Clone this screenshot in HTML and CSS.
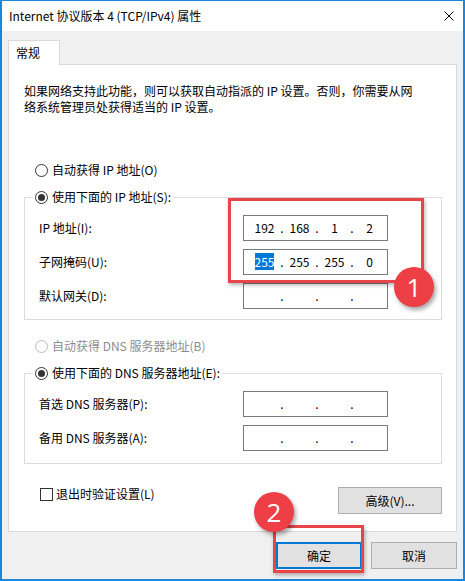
FILE: index.html
```html
<!DOCTYPE html>
<html lang="zh-CN">
<head>
    <meta charset="UTF-8">
    <title>Internet 协议版本 4 (TCP/IPv4) 属性</title>
    <link rel="stylesheet" href="styles.css">
</head>
<body>
    <div class="window">
        <div class="titlebar">
            <span class="title">Internet 协议版本 4 (TCP/IPv4) 属性</span>
            <svg class="close" width="10" height="10" viewBox="0 0 10 10">
                <path d="M0.5 0.5 L9.5 9.5 M9.5 0.5 L0.5 9.5" stroke="#000" stroke-width="1" fill="none"/>
            </svg>
        </div>
        <div class="client">
            <div class="tab">常规</div>
            <div class="panel">
                <p class="desc">如果网络支持此功能，则可以获取自动指派的 IP 设置。否则，你需要从网<br>络系统管理员处获得适当的 IP 设置。</p>

                <div class="radio first"><span class="circle"></span>自动获得 IP 地址(O)</div>

                <fieldset class="group">
                    <legend><div class="radio"><span class="circle checked"></span>使用下面的 IP 地址(S):</div></legend>
                    <div class="row">
                        <span class="row-label">IP 地址(I):</span>
                        <div class="ip">
                            <span class="seg">192</span><span class="sep">.</span><span class="seg">168</span><span class="sep">.</span><span class="seg">1</span><span class="sep">.</span><span class="seg">2</span>
                        </div>
                    </div>
                    <div class="row">
                        <span class="row-label">子网掩码(U):</span>
                        <div class="ip">
                            <span class="seg"><span class="sel">255</span></span><span class="sep">.</span><span class="seg">255</span><span class="sep">.</span><span class="seg">255</span><span class="sep">.</span><span class="seg">0</span>
                        </div>
                    </div>
                    <div class="row">
                        <span class="row-label">默认网关(D):</span>
                        <div class="ip">
                            <span class="seg"></span><span class="sep">.</span><span class="seg"></span><span class="sep">.</span><span class="seg"></span><span class="sep">.</span><span class="seg"></span>
                        </div>
                    </div>
                </fieldset>

                <div class="radio disabled"><span class="circle"></span>自动获得 DNS 服务器地址(B)</div>

                <fieldset class="group dns">
                    <legend><div class="radio"><span class="circle checked"></span>使用下面的 DNS 服务器地址(E):</div></legend>
                    <div class="row">
                        <span class="row-label">首选 DNS 服务器(P):</span>
                        <div class="ip">
                            <span class="seg"></span><span class="sep">.</span><span class="seg"></span><span class="sep">.</span><span class="seg"></span><span class="sep">.</span><span class="seg"></span>
                        </div>
                    </div>
                    <div class="row">
                        <span class="row-label">备用 DNS 服务器(A):</span>
                        <div class="ip">
                            <span class="seg"></span><span class="sep">.</span><span class="seg"></span><span class="sep">.</span><span class="seg"></span><span class="sep">.</span><span class="seg"></span>
                        </div>
                    </div>
                </fieldset>

                <div class="footer">
                    <div class="check"><span class="box"></span>退出时验证设置(L)</div>
                    <button class="btn adv">高级(V)...</button>
                </div>
            </div>
            <div class="actions">
                <button class="btn default">确定</button>
                <button class="btn">取消</button>
            </div>
        </div>

        <!-- annotations -->
        <div class="mark mark-1"></div>
        <div class="badge badge-1">1</div>
        <div class="mark mark-2"></div>
        <div class="badge badge-2">2</div>
    </div>
</body>
</html>
```

FILE: styles.css
```css
body {
    margin: 0;
    font-family: "Noto Sans CJK SC", sans-serif;
    font-size: 12px;
    line-height: 16px;
    color: #000;
}
.window {
    position: relative;
    width: 465px;
    height: 581px;
    box-sizing: border-box;
    border: 2px solid #1a86dc;
    border-top-width: 1px;
    background-color: #f0f0f0;
}
.titlebar {
    height: 30px;
    background-color: #fff;
    display: flex;
    align-items: center;
    justify-content: space-between;
    padding: 0 9px 0 7px;
}
.close {
    display: block;
}
.client {
    padding: 9px 6px 0 6px;
}
.tab {
    position: relative;
    z-index: 1;
    width: 52px;
    height: 25px;
    box-sizing: border-box;
    border: 1px solid #d9d9d9;
    border-bottom: none;
    background-color: #fff;
    padding: 4px 0 0 7px;
    margin-bottom: -1px;
}
.panel {
    height: 468px;
    box-sizing: border-box;
    border: 1px solid #d9d9d9;
    background-color: #fff;
    padding: 18px 13px 0 15px;
}
.desc {
    margin: 0;
}
.radio {
    display: flex;
    align-items: center;
    gap: 4px;
    height: 16px;
    white-space: nowrap;
}
.radio.first {
    margin-top: 47px;
    padding-left: 11px;
}
.radio.disabled {
    margin-top: 18px;
    padding-left: 11px;
    color: #8d8d8d;
}
.circle {
    position: relative;
    width: 13px;
    height: 13px;
    box-sizing: border-box;
    border: 1px solid #333;
    border-radius: 50%;
    background-color: #fff;
}
.circle.checked::after {
    content: "";
    position: absolute;
    left: 2px;
    top: 2px;
    width: 7px;
    height: 7px;
    border-radius: 50%;
    background-color: #333;
}
.disabled .circle {
    border-color: #bcbcbc;
}
.group {
    width: 418px;
    box-sizing: border-box;
    min-width: 0;
    margin: 11px 0 0;
    padding: 10px 0 10px 0;
    border: 1px solid #dcdcdc;
}
.group.dns {
    padding-bottom: 12px;
}
.group legend {
    margin-left: 8px;
    padding: 0 2px;
}
.row {
    display: flex;
    align-items: center;
    height: 26px;
    padding-left: 14px;
}
.row + .row {
    margin-top: 8px;
}
.row-label {
    width: 204px;
}
.ip {
    display: flex;
    align-items: center;
    width: 145px;
    height: 26px;
    box-sizing: border-box;
    border: 1px solid #7a7a7a;
    padding-left: 7px;
}
.seg {
    width: 27px;
    text-align: center;
}
.sep {
    width: 8px;
    text-align: center;
}
.sel {
    background-color: #0078d7;
    color: #fff;
}
.footer {
    display: flex;
    justify-content: space-between;
    align-items: flex-start;
    margin-top: 22px;
    padding-left: 16px;
}
.check {
    display: flex;
    align-items: center;
    gap: 3px;
    height: 16px;
}
.box {
    width: 13px;
    height: 13px;
    box-sizing: border-box;
    border: 1px solid #333;
    background-color: #fff;
}
.btn {
    width: 86px;
    height: 27px;
    box-sizing: border-box;
    border: 1px solid #adadad;
    background-color: #e1e1e1;
    font-family: inherit;
    font-size: 12px;
    color: #000;
    padding: 0;
}
.btn.adv {
    width: 104px;
    margin: 1px 1px 0 0;
}
.btn.default {
    border: 2px solid #0078d7;
}
.actions {
    display: flex;
    justify-content: flex-end;
    gap: 9px;
    margin-top: 10px;
}
.mark {
    position: absolute;
    box-sizing: border-box;
    border: 3px solid #e8454b;
    box-shadow: 1px 2px 4px rgba(0, 0, 0, 0.3);
}
.mark-1 {
    left: 226px;
    top: 197px;
    width: 196px;
    height: 85px;
}
.mark-2 {
    left: 271px;
    top: 524px;
    width: 91px;
    height: 48px;
}
.badge {
    position: absolute;
    width: 40px;
    height: 40px;
    border-radius: 50%;
    background-color: #ee3e46;
    box-shadow: 2px 3px 4px rgba(0, 0, 0, 0.35);
    color: #fff;
    font-family: "Open Sans", sans-serif;
    font-size: 26px;
    line-height: 40px;
    text-align: center;
}
.badge-1 {
    left: 392px;
    top: 266px;
}
.badge-2 {
    left: 252px;
    top: 491px;
}
```
